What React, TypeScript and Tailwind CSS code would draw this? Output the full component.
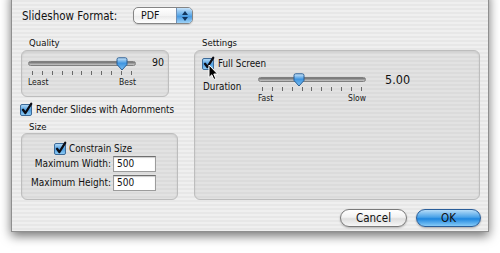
import React from "react";

const FONT = "font-['DejaVu_Sans_Condensed','DejaVu_Sans',sans-serif]";

function Checkbox() {
  return (
    <svg width="13" height="13" viewBox="0 0 13 13" className="shrink-0 overflow-visible">
      <defs>
        <linearGradient id="cbg" x1="0" y1="0" x2="0" y2="1">
          <stop offset="0" stopColor="#b8dcf7" />
          <stop offset="0.5" stopColor="#4f9fe2" />
          <stop offset="1" stopColor="#92cdf5" />
        </linearGradient>
      </defs>
      <rect x="0.5" y="1.5" width="11" height="11" rx="1.5" fill="url(#cbg)" stroke="#3d6a98" />
      <path d="M3 6.8 L5.4 10 L11.2 0.8" stroke="#0c0c14" strokeWidth="2.3" fill="none" strokeLinecap="round" strokeLinejoin="round" />
    </svg>
  );
}

function Thumb() {
  return (
    <svg width="12" height="14" viewBox="0 0 12 14">
      <defs>
        <linearGradient id="thg" x1="0" y1="0" x2="0" y2="1">
          <stop offset="0" stopColor="#cfe8fb" />
          <stop offset="0.45" stopColor="#3f95e0" />
          <stop offset="1" stopColor="#7cc0f3" />
        </linearGradient>
      </defs>
      <path d="M1 2.5 Q1 0.8 2.7 0.8 H9.3 Q11 0.8 11 2.5 V7.5 L6 13 L1 7.5 Z" fill="url(#thg)" stroke="#2b5f95" strokeWidth="1" />
    </svg>
  );
}

function Slider({ thumbLeft, left, right }: { thumbLeft: string; left: string; right: string }) {
  const ticks = Array.from({ length: 11 });
  return (
    <div className="relative w-[108px]">
      <div className="h-[5px] rounded-full bg-[linear-gradient(180deg,#6f6f6f,#9c9c9c_50%,#c8c8c8)] border border-[#7f7f7f]" />
      <div className={`absolute top-[-4px] ${thumbLeft}`}>
        <Thumb />
      </div>
      <div className="mt-[5px] h-[4px] px-[4px] flex justify-between">
        {ticks.map((_, i) => (
          <div key={i} className="w-px h-[4px] bg-[#6a6a6a]" />
        ))}
      </div>
      <div className="mt-[2px] flex justify-between leading-[11px] text-[8.5px] text-[#1a1a1a]">
        <span>{left}</span>
        <span>{right}</span>
      </div>
    </div>
  );
}

function Group({ className, children }: { className: string; children?: React.ReactNode }) {
  return (
    <div
      className={`relative rounded-[6px] border border-[#bdbdbd] bg-[rgba(0,0,0,0.05)] shadow-[inset_0_1px_2px_rgba(0,0,0,0.1)] ${className}`}
    >
      {children}
    </div>
  );
}

function TextField({ label, value }: { label: string; value: string }) {
  return (
    <div className="flex items-center">
      <div className="w-[89px] text-right leading-[12px] whitespace-nowrap text-[10px]">{label}</div>
      <div className="ml-[2px] w-[43px] h-[16px] bg-white border border-[#9c9c9c] border-t-[#6f6f6f] shadow-[inset_0_1px_1px_rgba(0,0,0,0.2)] pl-[3px] leading-[14px] text-[10px]">
        {value}
      </div>
    </div>
  );
}

export default function App() {
  return (
    <div className={`w-[500px] h-[253px] bg-white overflow-hidden ${FONT} text-[10px] text-[#111]`}>
      <div className="ml-[11px] mt-[-10px] w-[478px] h-[242px] border-l border-r border-b border-[#8f8f8f] bg-[repeating-linear-gradient(180deg,#efefef_0px,#efefef_2px,#e7e7e7_2px,#e7e7e7_4px)] shadow-[0_4px_10px_rgba(0,0,0,0.55)] pt-[17px] pl-[9px] pr-[7px] flex flex-col">
        {/* Header */}
        <div className="flex items-center h-[17px]">
          <div className="ml-[1px] w-[111px] text-[11.5px] leading-[14px] whitespace-nowrap">Slideshow Format:</div>
          <div className="w-[60px] h-[17px] rounded-[5px] border border-[#858585] bg-[linear-gradient(180deg,#ffffff,#f4f4f4_50%,#e9e9e9_51%,#ffffff)] flex items-center overflow-hidden shadow-[0_1px_1px_rgba(0,0,0,0.15)]">
            <div className="flex-1 pl-[7px] text-[10.5px] leading-[15px]">PDF</div>
            <div className="w-[16px] h-full border-l border-[#6f8fb5] bg-[linear-gradient(180deg,#c5e2fa,#5aa7e6_50%,#3f93df_51%,#9fd3f7)] flex flex-col items-center justify-center gap-[2px]">
              <svg width="6" height="4" viewBox="0 0 6 4"><path d="M0 4 L3 0 L6 4 Z" fill="#12365e" /></svg>
              <svg width="6" height="4" viewBox="0 0 6 4"><path d="M0 0 L3 4 L6 0 Z" fill="#12365e" /></svg>
            </div>
          </div>
        </div>

        {/* Main */}
        <div className="mt-[12px] flex gap-[16px]">
          {/* Left column */}
          <div className="w-[157px] flex flex-col">
            <div className="pl-[8px] h-[14px] leading-[14px] text-[9.5px]">Quality</div>
            <Group className="w-[148px] h-[47px] flex">
              <div className="ml-[6px] pt-[10px]">
                <Slider thumbLeft="left-[88px]" left="Least" right="Best" />
              </div>
              <div className="ml-[16px] pt-[5px] leading-[12px] text-[10.5px]">90</div>
            </Group>
            <div className="mt-[6px] h-[13px] flex items-center gap-[2px] ml-[-1px] whitespace-nowrap">
              <Checkbox />
              <span className="ml-[1px] leading-[12px] text-[9.8px]">Render Slides with Adornments</span>
            </div>
            <div className="mt-[4px] pl-[8px] h-[13px] leading-[13px] text-[9.5px]">Size</div>
            <Group className="w-[157px] h-[67px] flex flex-col">
              <div className="pl-[32px] pt-[8px] h-[21px] flex items-center gap-[2px] whitespace-nowrap">
                <Checkbox />
                <span className="leading-[12px] text-[9.8px]">Constrain Size</span>
              </div>
              <div className="mt-[1px] flex flex-col gap-[3px]">
                <TextField label="Maximum Width:" value="500" />
                <TextField label="Maximum Height:" value="500" />
              </div>
            </Group>
          </div>

          {/* Right column */}
          <div className="w-[286px] flex flex-col">
            <div className="pl-[8px] h-[14px] leading-[14px] text-[9.5px]">Settings</div>
            <Group className="w-[286px] h-[150px]">
              <div className="pl-[7px] pt-[6px] h-[19px] flex items-center gap-[2px] whitespace-nowrap">
                <Checkbox />
                <span className="ml-[1px] leading-[12px] text-[9.8px]">Full Screen</span>
              </div>
              <div className="flex">
                <div className="w-[63px] pl-[8px] pt-[11px] leading-[12px] text-[9.8px]">Duration</div>
                <div className="pt-[7px]">
                  <Slider thumbLeft="left-[35px]" left="Fast" right="Slow" />
                </div>
                <div className="ml-[19px] pt-[3px] leading-[14px] text-[12.5px]">5.00</div>
              </div>
              {/* cursor */}
              <svg className="absolute left-[13px] top-[13px]" width="11" height="17" viewBox="0 0 11 17">
                <path d="M1 1 L1 13.5 L3.8 10.8 L5.8 15.5 L7.8 14.6 L5.8 10 L9.6 10 Z" fill="#000" stroke="#fff" strokeWidth="1" strokeLinejoin="round" />
              </svg>
            </Group>
          </div>
        </div>

        {/* Buttons */}
        <div className="mt-[9px] flex justify-end gap-[9px]">
          <div className="w-[67px] h-[18px] rounded-full border border-[#7a7a7a] bg-[linear-gradient(180deg,#ffffff,#f2f2f2_45%,#dedede_55%,#f7f7f7)] shadow-[0_1px_2px_rgba(0,0,0,0.25)] flex items-center justify-center text-[11.5px] leading-[14px]">
            Cancel
          </div>
          <div className="w-[65px] h-[18px] rounded-full border border-[#2a5e9a] bg-[linear-gradient(180deg,#b5dcf8,#4aa2e8_45%,#1f86df_55%,#86cbf7)] shadow-[0_1px_2px_rgba(0,0,0,0.3)] flex items-center justify-center text-[11.5px] leading-[14px]">
            OK
          </div>
        </div>
      </div>
    </div>
  );
}
